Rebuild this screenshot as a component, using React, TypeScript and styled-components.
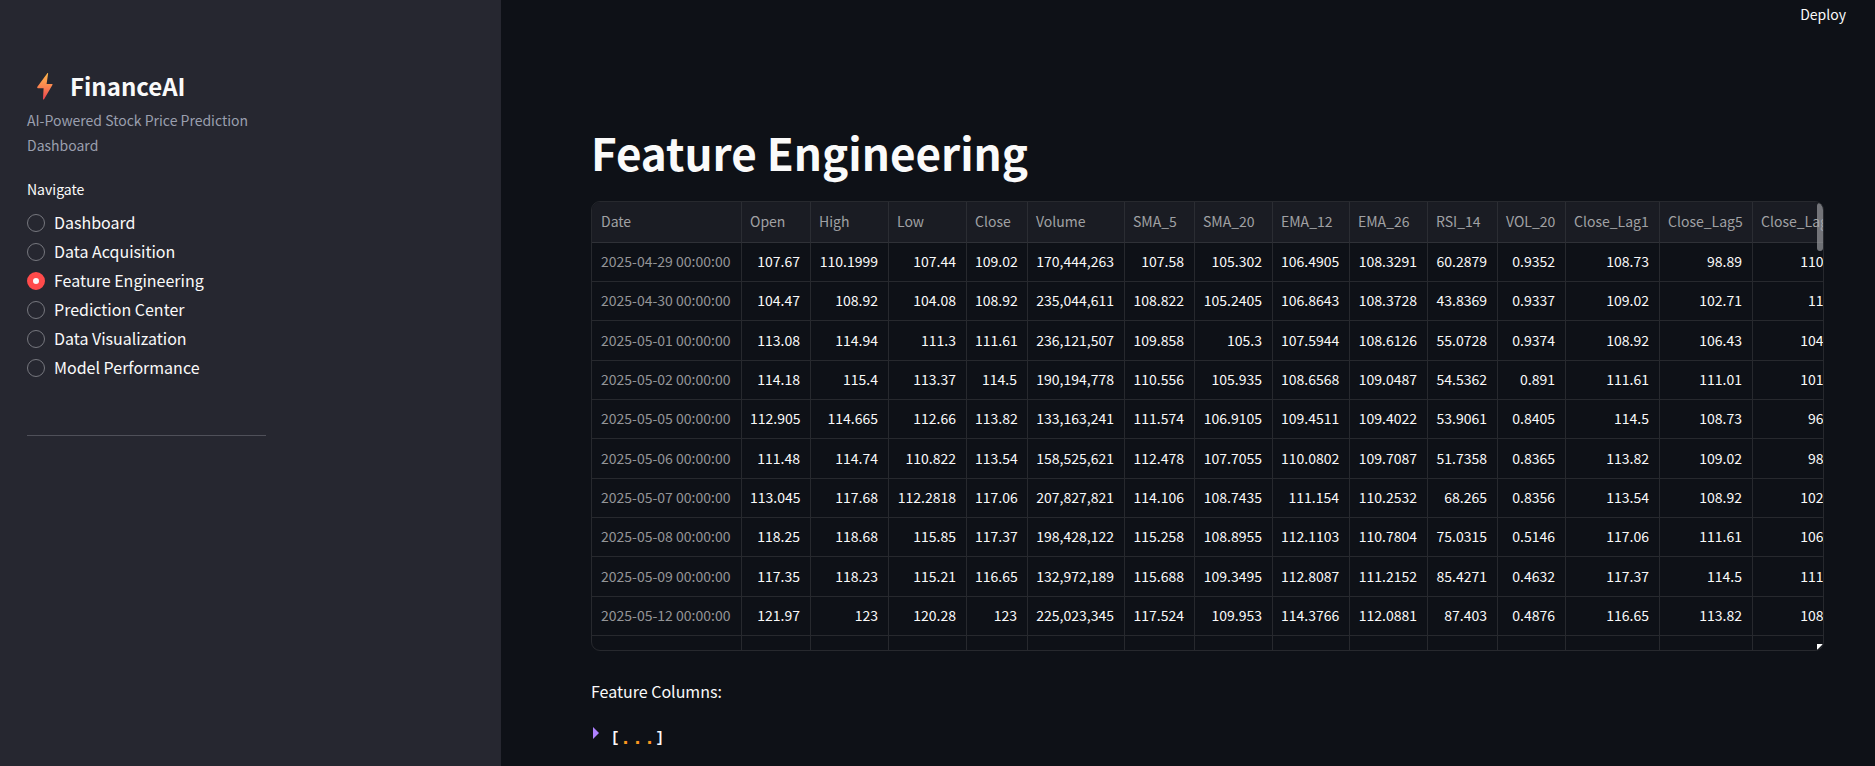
import React, { useState } from "react";
import styled, { createGlobalStyle } from "styled-components";

const GlobalStyle = createGlobalStyle`
  *, *::before, *::after { box-sizing: border-box; }
  body {
    margin: 0;
    background: #0e1117;
    color: #fafafa;
    font-family: "Noto Sans CJK SC", "Noto Sans", sans-serif;
    font-size: 16px;
    line-height: 29px;
  }
`;

const Page = styled.div`
  display: flex;
  min-height: 100vh;
`;

const Sidebar = styled.aside`
  flex: 0 0 501px;
  padding: 67px 27px 27px;
  background: #262730;
`;

const SidebarContent = styled.div`
  width: 239px;
`;

const Brand = styled.div`
  display: flex;
  align-items: center;
  height: 38px;
`;

const BoltIcon = styled.svg`
  width: 36px;
  height: 28px;
  margin-right: 7px;
`;

const BrandName = styled.h2`
  margin: 0;
  font-size: 24px;
  font-weight: 700;
  line-height: 38px;
`;

const Tagline = styled.p`
  margin: 3px 0 19px;
  font-size: 14px;
  line-height: 25px;
  color: #9a9fae;
`;

const NavGroup = styled.fieldset`
  margin: 0;
  padding: 0;
  border: 0;
`;

const NavTitle = styled.legend`
  padding: 0 0 6px;
  font-size: 14px;
  line-height: 25px;
`;

const NavOption = styled.label`
  display: flex;
  align-items: center;
  gap: 9px;
  height: 29px;
  cursor: pointer;
`;

const Radio = styled.input`
  appearance: none;
  width: 18px;
  height: 18px;
  margin: 0;
  border: 1px solid #76777e;
  border-radius: 50%;
  &:checked {
    border: 6px solid #ff4b4b;
    background: #fafafa;
  }
`;

const Divider = styled.hr`
  margin: 53px 0 0;
  border: 0;
  border-top: 1px solid #4f5059;
`;

const Main = styled.main`
  flex: 1;
  min-width: 0;
`;

const Toolbar = styled.header`
  display: flex;
  justify-content: flex-end;
  padding: 0 29px;
`;

const DeployButton = styled.button`
  padding: 0;
  border: 0;
  background: none;
  color: inherit;
  font: inherit;
  font-size: 14px;
  cursor: pointer;
`;

const Content = styled.div`
  padding: 93px 51px 0 90px;
`;

const Title = styled.h1`
  margin: 0 0 19px;
  font-size: 44px;
  font-weight: 700;
  line-height: 60px;
`;

const TableFrame = styled.div`
  position: relative;
  height: 450px;
  overflow: hidden;
  border: 1px solid #27292e;
  border-radius: 9px;
`;

const DataTable = styled.table`
  width: 1262px;
  table-layout: fixed;
  border-collapse: separate;
  border-spacing: 0;
  font-size: 14px;
  line-height: 20px;
`;

const Column = styled.col<{ $width: number }>`
  width: ${(p) => p.$width}px;
`;

const Row = styled.tr`
  height: 39px;
  &:nth-child(3n) { height: 40px; }
`;

const HeadCell = styled.th`
  height: 41px;
  padding: 0 8px 2px;
  border-right: 1px solid #2b2d33;
  border-bottom: 1px solid #2f3137;
  background: #1a1c23;
  color: #a0a1a4;
  font-weight: 400;
  text-align: left;
  &:first-child { padding-left: 9px; }
`;

const IndexCell = styled.th`
  padding: 0 9px 2px;
  border-right: 1px solid #27292e;
  border-bottom: 1px solid #27292e;
  color: #949597;
  font-weight: 400;
  text-align: left;
  white-space: nowrap;
`;

const Cell = styled.td`
  padding: 0 10px 2px 8px;
  border-right: 1px solid #27292e;
  border-bottom: 1px solid #27292e;
  text-align: right;
`;

const ScrollThumb = styled.div`
  position: absolute;
  top: 1px;
  right: 0;
  width: 6px;
  height: 48px;
  border-radius: 3px;
  background: rgba(163, 164, 167, 0.65);
`;

const ResizeCorner = styled.div`
  position: absolute;
  right: 0;
  bottom: 0;
  width: 6px;
  height: 6px;
  background: #ffffff;
  clip-path: polygon(0 0, 100% 0, 0 100%);
`;

const Caption = styled.p`
  margin: 26px 0 19px;
`;

const JsonToggle = styled.button`
  display: flex;
  align-items: center;
  height: 27px;
  padding: 0 0 0 2px;
  border: 0;
  background: none;
  color: #fafafa;
  font-family: "Liberation Mono", monospace;
  font-size: 14px;
  font-weight: 700;
  line-height: 27px;
  cursor: pointer;
`;

const Caret = styled.svg`
  width: 6px;
  height: 12px;
  margin: 0 12px 12px 0;
`;

const Ellipsis = styled.span`
  color: #fd971f;
  font-size: 20px;
`;

const pages = [
  "Dashboard",
  "Data Acquisition",
  "Feature Engineering",
  "Prediction Center",
  "Data Visualization",
  "Model Performance",
];

const columns: [string, number][] = [
  ["Date", 150],
  ["Open", 69],
  ["High", 78],
  ["Low", 78],
  ["Close", 61],
  ["Volume", 97],
  ["SMA_5", 70],
  ["SMA_20", 78],
  ["EMA_12", 77],
  ["EMA_26", 78],
  ["RSI_14", 70],
  ["VOL_20", 68],
  ["Close_Lag1", 94],
  ["Close_Lag5", 93],
  ["Close_Lag10", 101],
];

const rows = [
  ["2025-04-29", "107.67", "110.1999", "107.44", "109.02", "170,444,263", "107.58", "105.302", "106.4905", "108.3291", "60.2879", "0.9352", "108.73", "98.89", "110.71"],
  ["2025-04-30", "104.47", "108.92", "104.08", "108.92", "235,044,611", "108.822", "105.2405", "106.8643", "108.3728", "43.8369", "0.9337", "109.02", "102.71", "112.2"],
  ["2025-05-01", "113.08", "114.94", "111.3", "111.61", "236,121,507", "109.858", "105.3", "107.5944", "108.6126", "55.0728", "0.9374", "108.92", "106.43", "104.49"],
  ["2025-05-02", "114.18", "115.4", "113.37", "114.5", "190,194,778", "110.556", "105.935", "108.6568", "109.0487", "54.5362", "0.891", "111.61", "111.01", "101.49"],
  ["2025-05-05", "112.905", "114.665", "112.66", "113.82", "133,163,241", "111.574", "106.9105", "109.4511", "109.4022", "53.9061", "0.8405", "114.5", "108.73", "96.91"],
  ["2025-05-06", "111.48", "114.74", "110.822", "113.54", "158,525,621", "112.478", "107.7055", "110.0802", "109.7087", "51.7358", "0.8365", "113.82", "109.02", "98.89"],
  ["2025-05-07", "113.045", "117.68", "112.2818", "117.06", "207,827,821", "114.106", "108.7435", "111.154", "110.2532", "68.265", "0.8356", "113.54", "108.92", "102.71"],
  ["2025-05-08", "118.25", "118.68", "115.85", "117.37", "198,428,122", "115.258", "108.8955", "112.1103", "110.7804", "75.0315", "0.5146", "117.06", "111.61", "106.43"],
  ["2025-05-09", "117.35", "118.23", "115.21", "116.65", "132,972,189", "115.688", "109.3495", "112.8087", "111.2152", "85.4271", "0.4632", "117.37", "114.5", "111.01"],
  ["2025-05-12", "121.97", "123", "120.28", "123", "225,023,345", "117.524", "109.953", "114.3766", "112.0881", "87.403", "0.4876", "116.65", "113.82", "108.73"],
];

export default function App() {
  const [page, setPage] = useState("Feature Engineering");

  return (
    <Page>
      <GlobalStyle />
      <Sidebar>
        <SidebarContent>
          <Brand>
            <BoltIcon viewBox="0 0 36 28" aria-hidden="true">
              <defs>
                <linearGradient id="bolt" x1="0" y1="0" x2="0" y2="1">
                  <stop offset="0" stopColor="#fdb74a" />
                  <stop offset="0.5" stopColor="#fb8650" />
                  <stop offset="1" stopColor="#ee4150" />
                </linearGradient>
              </defs>
              <path d="M20.5 1.1 Q21.3 0.6 21.1 1.6 L19.6 11.9 H25 Q26 12.1 25.4 13.1 L17.2 27.1 Q16.2 28.2 16 26.9 L16.6 16.2 H11 Q9.8 15.9 10.4 14.8 Z" fill="url(#bolt)" />
            </BoltIcon>
            <BrandName>FinanceAI</BrandName>
          </Brand>
          <Tagline>AI-Powered Stock Price Prediction Dashboard</Tagline>
          <NavGroup>
            <NavTitle>Navigate</NavTitle>
            {pages.map((name) => (
              <NavOption key={name}>
                <Radio type="radio" name="page" checked={page === name} onChange={() => setPage(name)} />
                {name}
              </NavOption>
            ))}
          </NavGroup>
          <Divider />
        </SidebarContent>
      </Sidebar>
      <Main>
        <Toolbar>
          <DeployButton type="button">Deploy</DeployButton>
        </Toolbar>
        <Content>
          <Title>Feature Engineering</Title>
          <TableFrame>
            <DataTable>
              <colgroup>
                {columns.map(([name, width]) => (
                  <Column key={name} $width={width} />
                ))}
              </colgroup>
              <thead>
                <tr>
                  {columns.map(([name]) => (
                    <HeadCell key={name} scope="col">{name}</HeadCell>
                  ))}
                </tr>
              </thead>
              <tbody>
                {rows.map(([date, ...values]) => (
                  <Row key={date}>
                    <IndexCell scope="row">{date} 00:00:00</IndexCell>
                    {values.map((value, i) => (
                      <Cell key={i}>{value}</Cell>
                    ))}
                  </Row>
                ))}
                <Row>
                  {columns.map(([name]) => (
                    <Cell key={name} />
                  ))}
                </Row>
              </tbody>
            </DataTable>
            <ScrollThumb />
            <ResizeCorner />
          </TableFrame>
          <Caption>Feature Columns:</Caption>
          <JsonToggle type="button" aria-label="Expand feature columns">
            <Caret viewBox="0 0 6 12" aria-hidden="true">
              <path d="M0 0 L6 6 L0 12 Z" fill="#ae81ff" />
            </Caret>
            [<Ellipsis>...</Ellipsis>]
          </JsonToggle>
        </Content>
      </Main>
    </Page>
  );
}
